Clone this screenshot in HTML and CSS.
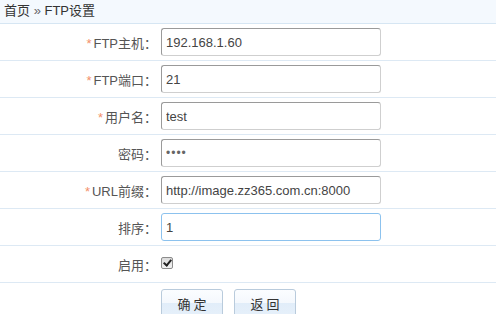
FILE: index.html
```html
<!DOCTYPE html>
<html lang="zh-CN">
<head>
    <meta charset="UTF-8">
    <title>FTP设置</title>
    <link rel="stylesheet" href="styles.css">
</head>
<body>
<div class="crumb">首页 <span class="sep">»</span> FTP设置</div>
<form class="form">
    <div class="row">
        <label class="label"><span class="req">*</span>FTP主机：</label>
        <div class="field"><input class="text" type="text" value="192.168.1.60"></div>
    </div>
    <div class="row">
        <label class="label"><span class="req">*</span>FTP端口：</label>
        <div class="field"><input class="text" type="text" value="21"></div>
    </div>
    <div class="row">
        <label class="label"><span class="req">*</span>用户名：</label>
        <div class="field"><input class="text" type="text" value="test"></div>
    </div>
    <div class="row">
        <label class="label">密码：</label>
        <div class="field"><input class="text pass" type="password" value="test"></div>
    </div>
    <div class="row">
        <label class="label"><span class="req">*</span>URL前缀：</label>
        <div class="field"><input class="text" type="text" value="http://image.zz365.com.cn:8000"></div>
    </div>
    <div class="row">
        <label class="label">排序：</label>
        <div class="field"><input class="text active" type="text" value="1"></div>
    </div>
    <div class="row">
        <label class="label">启用：</label>
        <div class="field"><input class="check" type="checkbox" checked></div>
    </div>
    <div class="actions">
        <button type="submit" class="btn">确 定</button>
        <button type="button" class="btn">返 回</button>
    </div>
</form>
</body>
</html>
```

FILE: styles.css
```css
body {
    margin: 0;
    font-family: "Liberation Sans", "Noto Sans CJK SC", sans-serif;
    font-size: 12px;
    color: #333;
    background: #fff;
}

.crumb {
    height: 23px;
    line-height: 22px;
    padding-left: 4px;
    font-size: 13px;
    color: #333;
    background: #f4f9fe;
    border-bottom: 1px solid #d6e6f3;
}

.crumb .sep {
    color: #666;
}

.row {
    display: flex;
    align-items: center;
    height: 36px;
    border-bottom: 1px solid #dde9f4;
}

.label {
    width: 157px;
    text-align: right;
    font-size: 13px;
    color: #555;
}

.req {
    color: #f3906a;
    margin-right: 2px;
}

.field {
    padding-left: 4px;
    display: flex;
    align-items: center;
}

.text {
    box-sizing: border-box;
    width: 220px;
    height: 28px;
    padding: 0 4px;
    font-family: "Liberation Sans", sans-serif;
    font-size: 13px;
    color: #444;
    border: 1px solid #cfcfcf;
    border-top-color: #9a9a9a;
    border-left-color: #9a9a9a;
    border-radius: 3px;
    outline: none;
}

.text.pass {
    font-size: 12px;
    letter-spacing: 1px;
    color: #666;
}

.text.active {
    border-color: #8cc2ee;
}

.check {
    appearance: none;
    position: relative;
    margin: 0 0 2px;
    width: 12px;
    height: 12px;
    border: 1px solid #8c8c8c;
    border-radius: 2px;
    background: linear-gradient(#dcdcdc, #f2f2f2);
}

.check:checked::after {
    content: "";
    position: absolute;
    left: 3px;
    top: 0;
    width: 3px;
    height: 6px;
    border: solid #222;
    border-width: 0 2px 2px 0;
    transform: rotate(40deg);
}

.actions {
    display: flex;
    gap: 11px;
    padding: 6px 0 0 161px;
}

.btn {
    width: 62px;
    height: 28px;
    font-family: "Noto Sans CJK SC", sans-serif;
    font-size: 13px;
    color: #333;
    background: linear-gradient(#fbfdff, #f4f8fd 50%, #e1edf9 51%, #e6f0fa);
    border: 1px solid #b9cbdc;
    border-radius: 3px;
}
```
